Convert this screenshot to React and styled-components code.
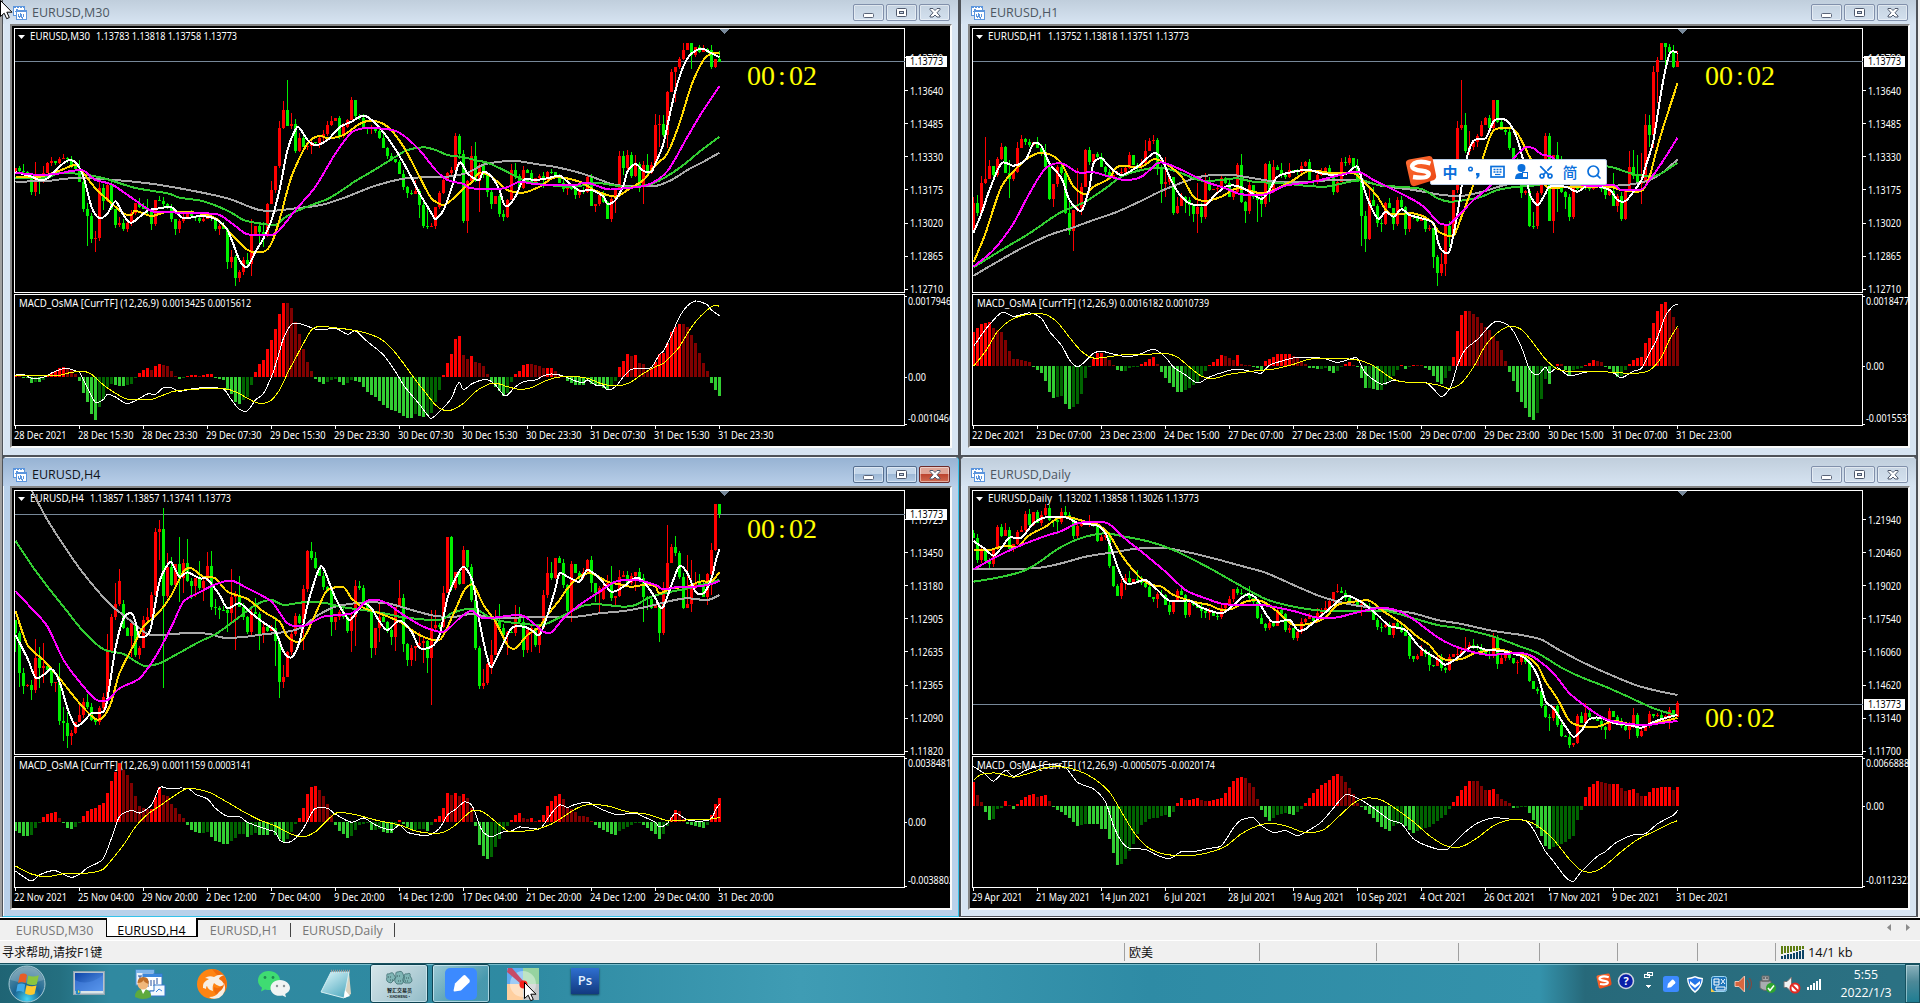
import React from 'react'
import styled, { createGlobalStyle, css } from 'styled-components'
import { Scissors, Search } from 'lucide-react'

const GlobalStyle = createGlobalStyle`
  html, body {
    background: #f0f0f0;
    margin: 0;
    overflow: hidden;
  }
  * {
    box-sizing: border-box;
  }
`

const UI_FONT = '"Open Sans", "Noto Sans", "Noto Sans CJK SC", sans-serif'
const PLOT_FONT = '"Noto Sans", "Open Sans", sans-serif'

/* ---------- data ---------- */

// candles: closing level, ^ high, v low, o open (when it differs from the last close)
// lines and bars: "bar level" pairs, levels between two pairs are interpolated
const charts = {
  m30: {
    title: 'EURUSD,M30',
    nameWidth: 60,
    values: '1.13783 1.13818 1.13758 1.13773',
    offset: 0,
    priceY: 61,
    clockY: 85,
    labels: ['1.13790', '1.13640', '1.13485', '1.13330', '1.13175', '1.13020', '1.12865', '1.12710'],
    dates: ['28 Dec 2021', '28 Dec 15:30', '28 Dec 23:30', '29 Dec 07:30', '29 Dec 15:30', '29 Dec 23:30', '30 Dec 07:30', '30 Dec 15:30', '30 Dec 23:30', '31 Dec 07:30', '31 Dec 15:30', '31 Dec 23:30'],
    candles: '503o515 512 516^492 535 575v585 535^487v588 545v583 520^498v550 490 483^470 490 478 474 476v490 497 507 545^480 628v637 647^610v738 718v728 715^693v755 565^545v722 602^552v630 555 628v630 675v683 668^650 687v692 670v695 640 608 620^595 627 632^597 672v690 600v678 603^588 612 622 657v665 687v705 664v700 650 640 648 655 662 657 652 655 687 678v705 686 785v806 770^750v803 833^765v858 815v845 780^770 793^758v805 703^658v827 678 697v730 707^665v740 612 570^543 497 385^363 330^303 378^240 372^340 453^358 413^400 440 437 425v463 430 415v443 403 375^362 363^347 354 408 380 360 300 348^300 355 383 388v402 384v402 392 415 443 467 478 487 521 562 578v593 583 573^540 615v655 678^600 681^620v688 678 620v687 580 540 520 510 408^398 463v478 662v670 543v698 467^437 543^427 495v635 525 577v590 612v628 588 643 650v662 600 510^492 527^488 563 510 520 545 535 527 540v565 515 515 527 550 568 563v585 568 585v597 573 575 530 618 612v635 585 607 657 597 565v640 468^453 503^453v525 465^450 527 492^465 555v575 496v612 520^462 495 375^342 372^345v440 405^345 275v443 217 202v305 177 150^130 130^130 165^130v207 142 155 148 150 200^135 178 185^154',
    ma: {
      gray: '0 546 4 544 8 543 15 534 25 540 35 553 45 574 53 595 58 618 61 630 64 633 70 625 75 618 78 610 82 594 85 580 90 557 97 536 102 532 108 530 113 518 117 494 122 484 126 484 130 492 135 501 140 515 144 530 150 555 156 558 160 558 164 540 168 510 172 485 176 458',
      green: '0 534 8 532 11 518 18 525 23 538 30 564 38 580 41 593 47 604 53 632 57 660 60 668 65 675 67 655 70 635 74 615 78 597 82 568 85 543 90 508 95 470 98 450 102 442 105 450 108 465 112 472 116 483 118 488 122 510 127 540 132 553 140 560 145 548 152 560 158 555 162 535 167 495 171 455 176 410',
      gold: '0 530 6 530 11 512 15 495 17 520 20 565 24 610 27 640 29 645 30 632 34 648 38 635 45 638 50 655 53 690 58 750 62 755 64 730 66 660 69 530 73 430 76 407 78 415 82 405 86 372 89 362 93 380 97 440 101 530 104 595 107 615 109 600 112 565 114 548 116 518 119 530 123 570 127 578 131 560 135 532 141 545 145 572 150 590 153 570 157 540 159 510 161 485 163 460 166 370 169 255 172 180 174 160 176 158',
      white: '0 516 4 530 6 540 8 535 11 500 13 482 15 487 17 530 19 620 21 655 23 640 25 604 27 645 29 668 33 632 36 625 39 622 42 655 46 648 50 657 53 690 56 780 58 800 60 755 62 715 64 660 66 570 68 450 70 388 71 384 73 420 75 435 78 420 81 382 84 365 87 347 90 370 94 430 98 510 101 580 104 640 105 657 107 630 109 565 111 488 113 520 115 538 116 540 117 515 119 530 121 570 122 610 123 618 125 590 127 540 130 540 133 535 136 527 138 545 141 572 144 570 147 590 148 612 150 600 152 555 153 515 155 492 157 513 159 515 160 490 162 430 164 320 166 230 168 175 170 152 172 147 174 160 176 172',
      magenta: '0 518 5 524 10 522 14 513 17 512 20 540 24 553 29 593 34 633 38 635 42 640 47 640 51 645 55 678 58 703 64 705 66 690 70 630 75 560 80 460 84 398 87 385 92 386 96 398 101 450 105 510 108 540 112 552 114 565 122 565 126 545 130 553 137 555 140 555 143 548 148 568 152 565 158 555 163 513 168 410 172 330 176 258',
    },
    osma: {
      values: '0.0013425 0.0015612',
      valuesWidth: 89,
      unit: 3,
      offset: 285,
      zero: 276,
      labels: ['0.0017946', '-0.0010466'],
      bars: '0 3 3 -2 4 -18 5 -14 6 -15 7 -10 8 0 9 12 10 18 11 27 12 30 13 28 14 20 15 8 16 -12 17 -48 18 -75 19 -112 20 -129 21 -90 22 -70 23 -30 24 -22 25 -24 27 -27 29 -20 30 -2 31 12 33 27 34 20 35 32 36 39 38 32 39 18 40 2 41 -6 43 3 45 6 46 2 48 9 49 9 50 -3 52 -9 53 -35 54 -50 55 -75 56 -81 57 -70 58 -60 59 -24 60 15 61 39 62 51 63 84 64 111 65 144 66 189 67 222 68 221 69 207 70 165 71 129 72 84 73 45 74 18 75 -6 77 -21 79 -9 80 -6 82 -24 84 -9 86 -15 88 -45 90 -60 92 -85 94 -98 96 -108 98 -123 99 -123 100 -111 102 -120 104 -108 105 -75 106 -40 107 6 108 42 109 69 110 114 111 123 112 66 113 54 114 63 115 45 116 42 117 33 118 8 119 -15 121 -42 122 -57 123 -48 124 -15 125 9 126 18 127 36 128 39 130 36 132 27 133 27 134 27 136 6 137 0 138 -12 140 -24 142 -24 143 -12 144 -20 146 -27 148 -36 150 -12 151 30 152 48 153 69 154 63 155 66 156 42 157 39 158 20 159 27 160 45 161 69 162 72 163 102 164 135 165 150 166 159 167 158 168 150 169 126 170 102 171 72 172 42 173 18 174 -18 175 -39 176 -57',
      white: '0 268 2 268 4 280 7 277 9 264 11 254 13 250 15 258 16 262 18 310 20 352 22 343 23 328 25 336 27 352 28 356 30 347 33 327 35 328 37 308 39 308 41 319 44 312 48 307 52 313 54 345 56 373 58 377 60 345 62 325 64 275 65 240 66 200 67 160 69 118 71 116 73 124 76 135 80 130 83 148 85 138 88 170 92 210 95 260 97 300 99 330 101 358 103 390 104 400 106 380 109 340 110 310 111 292 112 314 114 297 116 287 118 284 120 300 122 330 123 330 125 305 127 290 130 285 132 272 134 267 136 270 138 278 140 288 142 293 143 285 145 300 147 303 148 315 150 305 152 275 154 253 157 250 159 247 161 208 162 198 164 150 166 95 168 62 170 48 172 54 173 60 174 75 176 92',
      yellow: '0 272 5 271 8 272 11 271 14 262 17 259 19 268 22 300 25 325 28 343 31 344 34 343 37 330 40 318 46 312 52 311 55 320 58 340 60 352 62 355 64 345 66 315 68 265 70 220 72 175 74 135 76 124 79 127 83 133 87 142 91 160 94 190 97 235 100 285 102 315 105 360 107 375 109 375 112 355 115 320 117 305 119 295 121 297 123 305 126 313 129 308 132 290 135 278 139 274 143 280 147 298 151 302 154 290 157 265 160 245 162 235 164 212 166 185 168 145 170 110 172 85 174 65 175 61 176 64',
    },
  },
  h1: {
    title: 'EURUSD,H1',
    nameWidth: 54,
    values: '1.13752 1.13818 1.13751 1.13773',
    offset: 0,
    priceY: 61,
    clockY: 85,
    labels: ['1.13790', '1.13640', '1.13485', '1.13330', '1.13175', '1.13020', '1.12865', '1.12710'],
    dates: ['22 Dec 2021', '23 Dec 07:00', '23 Dec 23:00', '24 Dec 15:00', '27 Dec 07:00', '27 Dec 23:00', '28 Dec 15:00', '29 Dec 07:00', '29 Dec 23:00', '30 Dec 15:00', '31 Dec 07:00', '31 Dec 23:00'],
    candles: '610o690^590 638^585 550^528 537^410 498^480 525 478 440 518 537^480v593 515 443^427 418 425 435 425 445^412 458 500^432 597 553v620 500 520 640 692^600v705 630v752 625^505 560v645 450 487^440 463 470 500^460 515 535 525 520 517 505 465 495 500 490 453^420 423 420^405 508v525 553v610 547^470v590 530 640 618^590 592 600v640 615v648 643v665 620^550v698 650v668 540^520 570 567 565 535 550 590 575 495 605^462 633v668 555 590 600v665 612v650 493 577v605 500^480 510 525^490 530 510^490 512 515 497 487 540 545 525 515 503 515 575v585 545 487 490^470 475 500 545^478 647v738 717^632v755 600^560 618^560 668v682 672v695 610 625^595 672v690 600^590 620 687v705 645 652 662 655 687 685 772v805 818^765v858 793^760 677v827 705^663v740 570 383^363 375^240 453^340v460 440^393v465 425 408v440 375^362 354 383 300 365^300 390 397 443 480 520 578v593 572 677 678^635v688 580 530 408^398 662 465v698 480^427v635 577 590v627 650v662 565 568 555 560 566 555 560 567 585v597 573 618^520 587v635 657 570 500^453 528^450 553^465 545^460v612 375^342 405^345v440 217^197v443 180^172v308 130^130 142^130v200 155 200^135 183^154',
    ma: {
      gray: '0 827 6 785 12 745 19 705 25 682 30 660 36 635 42 602 46 578 51 553 56 532 60 525 65 525 70 535 76 545 84 545 90 540 96 540 102 557 110 570 116 583 118 586 122 588 127 576 132 558 137 545 145 550 152 556 158 558 163 555 166 550 169 540 172 520 174 500 176 478',
      green: '0 802 7 750 14 700 20 650 23 630 28 605 33 565 37 530 42 510 47 503 52 520 57 542 62 540 66 535 70 545 77 550 83 557 88 560 93 548 97 540 101 555 106 560 112 567 116 595 119 605 123 600 127 590 131 570 136 560 141 555 150 530 157 500 160 503 163 515 166 525 170 528 172 520 174 505 176 488',
      gold: '0 787 3 700 7 560 12 490 16 460 19 463 22 490 25 560 28 583 30 560 34 535 36 500 42 500 45 478 48 490 52 530 55 590 58 603 62 590 66 565 72 580 76 565 80 540 84 512 90 520 95 520 98 550 101 590 104 640 110 640 114 660 116 690 117 700 120 707 122 650 126 520 128 450 130 392 134 383 136 400 139 470 142 540 144 565 148 560 152 560 159 560 162 570 167 573 169 530 171 440 173 360 176 250',
      white: '0 698 2 640 4 570 7 490 10 497 13 480 15 430 17 438 19 490 22 535 24 600 27 632 29 560 30 490 32 475 34 500 37 525 41 500 45 460 47 475 49 530 51 575 54 610 58 615 60 590 63 560 66 558 69 575 72 597 74 570 76 530 80 515 84 510 88 523 93 523 96 500 98 580 101 655 103 635 105 650 107 628 109 645 112 655 115 670 116 720 117 750 119 753 121 640 123 490 125 422 128 415 130 365 132 356 134 370 136 420 138 510 139 580 141 615 143 580 144 560 148 560 151 575 154 555 159 570 161 600 163 603 165 575 167 540 168 500 170 420 172 270 174 162 176 158',
      magenta: '0 800 5 750 10 670 14 580 18 505 22 490 26 517 30 517 34 530 38 540 42 530 46 490 48 490 53 515 58 545 63 565 67 583 73 583 78 557 85 545 90 530 96 515 100 540 106 575 112 615 116 665 117 672 119 673 121 650 125 600 129 560 135 475 138 442 140 445 142 463 145 475 149 540 154 558 160 555 162 570 167 568 169 540 172 490 176 413',
    },
    osma: {
      values: '0.0016182 0.0010739',
      valuesWidth: 89,
      unit: 2.529,
      offset: 290,
      zero: 192,
      labels: ['0.0018477', '-0.0015537'],
      bars: '0 87 1 97 2 105 3 110 4 112 5 95 7 85 8 65 9 38 10 18 12 15 14 9 15 -3 17 -18 18 -38 19 -65 20 -80 22 -76 23 -95 24 -109 25 -103 26 -95 27 -70 28 -30 29 -3 30 18 31 32 32 32 33 24 34 16 35 2 36 -10 37 -13 38 -12 39 -4 41 -2 42 4 43 10 44 18 45 22 46 5 47 -15 48 -30 49 -42 51 -66 52 -66 54 -56 56 -40 57 -25 58 -12 59 3 61 18 62 28 63 26 65 15 66 27 67 4 69 3 71 -5 72 -10 73 12 75 24 76 30 79 30 81 20 83 5 84 -4 86 -8 88 -6 90 -18 91 -12 92 -2 94 10 96 -3 97 -30 98 -56 99 -55 101 -61 102 -60 103 -48 105 -26 106 -10 107 0 108 -8 110 2 112 1 113 -4 114 -10 115 -25 116 -40 117 -46 118 -30 119 -12 120 24 121 88 122 128 123 140 124 138 126 125 127 108 129 90 131 62 132 40 133 12 134 -16 135 -38 136 -65 137 -90 138 -105 139 -128 140 -137 141 -118 142 -84 143 -32 144 -45 145 -5 146 6 147 4 149 -24 150 -10 152 -5 153 3 155 14 157 9 158 -2 160 -15 161 -28 162 -25 163 -10 164 6 165 16 167 24 168 58 169 70 170 110 171 140 172 158 173 163 174 145 175 125 176 95',
      white: '0 143 3 100 7 57 10 67 14 58 17 72 19 105 22 140 24 177 26 194 28 180 30 160 32 155 35 162 38 168 41 165 45 150 48 170 50 195 53 215 56 235 59 220 63 206 66 200 70 207 72 210 74 190 77 180 80 172 84 170 88 174 91 183 95 172 96 173 98 210 102 238 105 228 108 233 113 234 115 250 117 270 119 250 120 225 121 190 123 150 126 125 130 82 133 85 135 105 137 145 139 200 141 215 143 195 144 210 146 197 149 217 153 208 156 205 160 210 162 222 165 205 167 198 169 160 171 120 173 65 175 40 176 36',
      yellow: '0 193 3 155 6 105 9 78 12 65 15 60 18 62 21 82 24 120 27 155 30 172 33 170 38 163 43 163 48 160 51 170 54 195 57 218 60 224 64 213 70 205 75 200 80 188 84 175 90 173 96 177 100 192 104 220 107 232 112 234 116 240 119 249 122 235 125 195 128 140 131 108 134 92 137 100 140 135 143 175 146 200 150 207 158 207 165 211 169 203 172 170 174 125 176 92',
    },
  },
  h4: {
    title: 'EURUSD,H4',
    nameWidth: 54,
    values: '1.13857 1.13857 1.13741 1.13773',
    offset: -7,
    priceY: 52,
    clockY: 76,
    labels: ['1.13725', '1.13450', '1.13180', '1.12905', '1.12635', '1.12365', '1.12090', '1.11820'],
    dates: ['22 Nov 2021', '25 Nov 04:00', '29 Nov 20:00', '2 Dec 12:00', '7 Dec 04:00', '9 Dec 20:00', '14 Dec 12:00', '17 Dec 04:00', '21 Dec 20:00', '24 Dec 12:00', '29 Dec 04:00', '31 Dec 20:00'],
    candles: '535o495v590 653v695 692^640v717 690 705^675v735 608^552 640^575v700 632^563v683 645 683 680v710 797^625v810 803^755v857 843^770v878 833v870 800 780^750 742^730 757^717 795^745 800v810 760v810 725 590^538 487 448^385 378^342 520o448 543 505v605 600 578v613 495 485^460 420 232^220 222^195v315 423^158v698 335^295 390^307 328 370^247v440 325^313v415 377^252 393v432 368v425 400^318 378v437 333^290 455^288 460^432v480 465v492 465 473v530 427^342v508 420^408v585 455^363 485 530 470v540 478^430 538v585 515v563 528 520 557^485v632 680v728 665^630v698 590 538 483^475 505 403v585 287 308^262 340^290 363 397 405 500v542 487v525 470 485 527v535 485v590 393^375v573 400^377 440^390 465 578v608 518v600 485^445v560 500 525 545v570 455v588 430^375 567v592 615v632 578v632 573v617 563^530 558v625 608v653 518^465v750 510^465 515 413^393 247^247 400^244 350 387 285 337^285 435 578v585 693v702 685^642v703 628 600^555v656 498^465 520^447 540v565 530v600 535 490^450 500^455 585v605 525v593 520v590 570 520v593 420^405 355^305 370^320 310 325 390 467 328v500 355 365 350 315 383^303v410 415v440 400v470 395o433 385^360 430^333 422v450 365^345 360 385^348 362 350v408 370^338 427v500 432v465 460 450 535v560 398^380 325^210 275 295^243 365 460 447^300 395^315v470 385^350 390^357 425 357v450 285^265v420 147^147 178^147v190',
    ma: {
      gray: '4 105 8 195 12 270 16 340 20 400 24 452 28 490 33 537 36 540 42 535 48 536 52 548 57 546 62 538 68 530 72 515 75 485 80 455 87 443 93 445 99 465 105 483 110 485 114 477 118 485 122 490 130 485 140 485 146 475 152 468 158 455 164 437 168 430 173 435 176 420',
      green: '0 257 4 330 8 395 12 455 17 530 22 583 27 597 32 632 36 625 40 600 46 560 50 538 55 495 60 450 64 435 67 450 72 442 77 443 82 457 87 465 93 477 97 487 106 495 109 475 113 462 116 468 120 495 130 510 133 505 138 475 142 452 146 448 152 455 155 450 159 425 164 410 170 395 176 375',
      gold: '0 467 3 570 7 615 11 670 16 745 20 792 22 785 24 740 26 655 30 560 32 515 36 470 39 420 42 350 44 340 47 365 50 370 53 410 58 432 62 470 66 500 68 545 71 562 73 530 76 450 78 405 82 397 84 430 87 458 91 475 96 500 101 540 106 555 109 490 112 410 114 388 115 400 117 450 120 500 123 570 125 580 128 540 131 515 133 480 136 435 138 400 141 365 144 355 148 380 151 388 154 395 158 388 160 395 161 415 164 400 168 395 171 380 174 378 176 352',
      white: '0 540 3 610 5 668 7 660 9 642 11 680 13 760 15 812 17 800 19 775 22 770 23 730 25 580 27 490 29 475 30 500 31 545 33 540 34 510 36 380 38 330 39 322 41 365 43 352 46 370 48 373 51 420 53 460 56 445 59 475 62 503 65 530 67 590 69 607 71 560 73 450 75 370 76 340 77 340 80 430 83 490 84 492 87 447 89 460 91 500 93 525 96 497 99 530 101 578 104 575 106 540 108 430 110 370 112 335 114 370 115 420 116 500 117 560 118 610 119 637 121 590 124 520 127 515 129 525 131 540 133 480 135 400 136 355 138 365 141 380 143 345 146 370 149 410 152 395 155 368 157 380 160 430 161 455 162 455 164 390 166 333 168 355 170 410 172 415 174 370 175 320 176 282',
      magenta: '0 408 4 460 8 515 12 615 16 680 20 733 23 735 26 700 31 670 35 605 39 515 42 440 46 412 50 388 54 377 58 400 64 440 68 505 72 513 77 485 84 475 88 437 92 440 97 480 102 515 107 530 111 490 114 467 117 490 126 480 129 500 132 530 134 532 137 490 141 450 146 410 150 380 155 375 160 390 162 403 166 395 170 395 174 387 176 377',
    },
    osma: {
      values: '0.0011159 0.0003141',
      valuesWidth: 89,
      unit: 3,
      offset: 283,
      zero: 232,
      labels: ['0.0038481', '-0.0038802'],
      bars: '0 -27 1 -32 2 -41 3 -41 4 -38 5 -18 6 -3 7 15 8 24 10 30 11 12 12 -3 13 -17 14 -20 15 -15 16 -2 17 18 18 33 20 42 22 57 23 88 24 124 25 150 26 178 27 155 28 140 29 118 30 78 31 48 33 38 34 40 35 75 36 105 37 82 38 78 39 54 40 42 41 24 42 12 43 -10 44 -24 46 -33 48 -30 50 -57 52 -65 53 -65 54 -57 56 -36 57 -35 58 -44 60 -32 61 -38 63 -38 64 -28 66 -50 67 -60 68 -50 69 -30 70 -5 71 12 72 42 73 85 74 105 75 108 76 96 77 78 78 55 79 22 80 -8 81 -26 83 -47 84 -42 85 -24 86 -8 88 -3 89 -24 91 -22 92 -30 94 -33 95 -15 96 6 97 -6 99 -24 102 -20 103 -27 104 -8 105 9 106 18 107 42 108 88 109 82 110 88 111 78 112 84 113 72 114 42 115 -11 116 -68 117 -102 118 -110 119 -105 120 -75 121 -50 122 -24 123 -12 124 6 125 20 126 27 127 12 128 9 129 12 130 3 131 6 132 22 133 48 134 62 135 78 136 84 137 68 138 45 140 30 141 18 143 15 144 3 145 -10 147 -24 149 -36 150 -39 151 -27 153 -15 155 -3 156 -2 158 -18 160 -36 161 -50 162 -36 163 -12 164 15 165 36 166 33 167 10 168 -6 170 -12 172 -18 173 -9 174 22 175 54 176 72',
      white: '0 378 2 395 4 408 6 390 8 380 10 377 12 388 14 397 16 388 18 368 20 357 22 340 24 280 26 215 29 196 31 204 34 180 36 128 38 130 43 130 45 148 48 162 50 190 53 214 56 215 58 232 62 250 65 262 66 285 68 293 70 280 72 250 74 205 75 190 78 190 80 208 84 232 87 219 90 240 94 255 96 240 98 262 101 270 103 272 106 250 108 210 110 193 112 172 113 172 114 180 115 205 116 240 117 262 119 275 122 260 124 258 126 246 129 250 131 252 132 240 134 205 136 180 138 187 140 178 143 172 146 190 150 208 155 205 157 215 160 232 161 246 163 235 165 205 168 225 172 228 174 220 175 195 176 178',
      yellow: '0 363 4 387 8 395 12 386 16 386 20 381 22 372 24 345 27 300 30 245 33 208 36 183 40 150 43 130 46 134 49 145 53 172 57 200 61 225 65 243 69 268 72 275 75 260 78 225 80 205 82 203 86 212 90 225 96 240 100 258 104 265 107 262 110 240 112 218 114 198 116 197 118 210 121 240 123 257 125 260 130 254 134 237 137 215 140 192 143 179 148 183 153 200 158 208 162 224 164 228 170 223 174 222 176 217',
    },
  },
  daily: {
    title: 'EURUSD,Daily',
    nameWidth: 64,
    values: '1.13202 1.13858 1.13026 1.13773',
    offset: -7,
    priceY: 242,
    clockY: 265,
    labels: ['1.21940', '1.20460', '1.19020', '1.17540', '1.16060', '1.14620', '1.13140', '1.11700'],
    dates: ['29 Apr 2021', '21 May 2021', '14 Jun 2021', '6 Jul 2021', '28 Jul 2021', '19 Aug 2021', '10 Sep 2021', '4 Oct 2021', '26 Oct 2021', '17 Nov 2021', '9 Dec 2021', '31 Dec 2021'],
    candles: '250o235^225 315^238 285v325 318 327v340 280 215 242^207 225^205 282 268v292 230 225^212 177^168 210^163 172 205^165 180 158^148 195^150 196v215 202v238 172 180^153 188 242 212v250 205 207 205^180 210 257 245 240 332 392 423 383 370^357v405 380^348 372 375^345 385 397 425 432 418v458 420 450 472 435 408 420 480 445 450 458 468v488 475v488 468v495 483 485v495 460 450 432 402 413^395 418 420 430^393 440 490 508 518 503 512 465 478 525 520v535 548v555 530 500 493 483 498 475^460 470 458^437 437 412 408^388 415 430^405 445 440 455 448v483 452 460 495 515 515v530 510 540 505 515 530 542 603 612v622 603 585^570 598 630v648 633 608 638 646v654 606 598 596^578 587 578^546 569 572^551 578 590 598 602 546^535 628v643 610 594 608 623 620v658 602 620 679 703 709 753 786 788v827 753 810 843 845 869v878 863 783 804 774^744 786 792 798 815 825v851 768 786 801 812 825 810v853 780^759 843 827 810 778 783 780 789 782 765v821 786 744',
    ma: {
      gray: '0 343 15 340 22 325 28 305 35 292 40 282 47 278 53 290 60 310 67 333 73 353 80 390 87 425 95 450 104 465 110 475 116 495 122 507 130 528 137 540 142 554 146 582 152 620 158 653 165 688 170 705 176 720',
      green: '0 380 6 368 12 350 16 325 20 290 24 263 28 245 33 235 37 243 44 260 50 285 58 333 65 380 73 432 80 455 87 467 94 468 103 468 110 490 116 510 122 521 130 545 137 576 141 594 147 638 152 667 158 695 164 727 170 760 176 782',
      gold: '0 285 4 285 8 272 11 275 14 240 18 215 21 190 24 187 28 200 31 208 34 240 37 300 41 360 44 388 47 395 50 420 55 440 59 450 62 465 65 460 68 440 72 438 76 470 80 510 85 503 88 487 91 450 95 440 99 437 102 465 107 505 111 545 114 570 116 600 118 614 122 612 125 596 128 588 131 582 135 594 138 602 141 632 143 679 146 732 149 798 152 813 156 815 160 798 164 807 168 810 172 800 176 789',
      white: '0 258 3 283 5 302 7 278 9 248 12 248 15 205 18 187 23 187 26 203 31 212 33 235 34 265 36 335 38 383 40 385 43 375 46 405 49 437 54 437 57 458 62 475 65 450 67 428 69 418 71 435 73 475 75 502 79 495 81 525 83 522 87 482 91 440 93 422 95 428 98 450 101 480 104 513 108 525 111 570 113 590 116 612 118 629 121 608 124 578 126 576 128 584 131 587 134 593 138 610 141 661 143 738 145 760 148 815 150 845 152 827 154 792 157 789 160 804 164 810 167 818 170 801 173 789 176 780',
      magenta: '0 343 5 310 12 270 18 243 22 228 26 205 31 200 34 208 38 252 42 290 48 350 53 405 58 430 63 448 72 450 80 468 86 488 91 487 96 472 101 460 105 463 109 485 113 520 116 547 120 572 125 592 129 600 133 596 138 596 141 614 145 655 149 715 154 762 158 792 162 804 168 810 172 804 176 798',
    },
    osma: {
      values: '-0.0005075 -0.0020174',
      valuesWidth: 95,
      unit: 2.529,
      offset: -172,
      zero: 1305,
      labels: ['0.0066888', '-0.0112323'],
      bars: '0 60 1 27 2 10 3 -15 4 -35 5 -34 6 -8 7 -5 8 12 10 -8 11 5 13 24 15 30 16 24 18 28 19 12 20 -3 22 -15 24 -30 26 -50 28 -45 31 -45 32 -57 33 -58 34 -83 35 -118 36 -149 37 -147 38 -133 39 -115 40 -96 41 -70 42 -47 44 -32 46 -30 48 -22 49 -28 50 -15 51 8 52 20 53 14 56 20 58 12 60 14 62 20 63 33 64 47 65 62 66 70 67 74 68 70 70 48 71 18 72 -10 73 -27 74 -38 76 -22 78 -18 80 -23 82 -8 83 8 85 33 87 53 89 65 90 77 91 80 92 76 93 60 95 30 96 8 97 -2 98 -10 100 -30 102 -52 104 -63 105 -50 107 -43 110 -68 112 -60 114 -52 116 -38 118 -24 119 -8 120 10 122 40 124 63 126 62 128 40 130 43 132 18 134 8 135 -5 138 -2 139 -18 141 -55 142 -75 143 -100 144 -108 146 -100 148 -90 150 -75 151 -35 152 -10 153 22 154 48 156 63 159 55 161 55 163 38 165 42 167 25 168 25 170 45 172 48 174 48 175 40 176 48',
      white: '0 1205 3 1225 5 1242 8 1215 10 1230 13 1215 16 1205 19 1200 23 1208 26 1245 30 1262 33 1295 35 1355 37 1395 39 1412 43 1415 46 1430 49 1438 52 1420 55 1420 59 1412 62 1405 65 1360 67 1340 70 1335 72 1355 75 1372 78 1367 81 1380 84 1365 87 1345 90 1310 93 1277 96 1285 100 1310 104 1340 107 1350 110 1388 114 1408 118 1416 120 1400 123 1370 126 1348 130 1335 134 1338 138 1342 140 1365 143 1420 145 1445 148 1485 150 1495 152 1470 156 1432 158 1420 161 1395 165 1378 168 1375 171 1350 175 1328 176 1315',
      yellow: '0 1240 2 1225 6 1222 10 1232 14 1222 18 1208 22 1206 26 1215 30 1235 34 1270 37 1320 40 1370 43 1405 46 1422 50 1430 55 1430 59 1422 63 1407 67 1375 71 1355 74 1349 78 1355 82 1370 85 1372 88 1362 92 1325 95 1298 98 1285 102 1290 106 1315 110 1345 114 1380 118 1405 122 1408 126 1385 130 1355 134 1340 138 1342 141 1355 145 1390 149 1440 152 1468 155 1471 158 1455 162 1420 166 1390 170 1370 174 1350 176 1342',
    },
  },
}

/* ---------- plotting ---------- */

const COLORS = { gray: '#a9a9a9', green: '#32cd32', gold: '#ffd700', white: '#fff', magenta: '#f0f' }
const BAR_COUNT = 177
const barX = (i) => 15.5 + i * 4

const toPairs = (text) => {
  const n = text.split(' ').map(Number)
  return n.reduce((acc, v, i) => (i % 2 ? acc : [...acc, [v, n[i + 1]]]), [])
}

const linePath = (text, unit, offset) => {
  const p = toPairs(text).map(([i, y]) => [barX(i), y / unit + offset])
  return p.reduce((d, [x, y], i) => {
    if (i === 0) return `M${x} ${y.toFixed(1)}`
    const a = p[i - 2] || p[i - 1]
    const b = p[i - 1]
    const c = p[i + 1] || p[i]
    const k = 0.14
    return `${d}C${(b[0] + (x - a[0]) * k).toFixed(1)} ${(b[1] + (y - a[1]) * k).toFixed(1)} ${(x - (c[0] - b[0]) * k).toFixed(1)} ${(y - (c[1] - b[1]) * k).toFixed(1)} ${x} ${y.toFixed(1)}`
  }, '')
}

const barValues = (text) => {
  const pairs = toPairs(text)
  return Array.from({ length: BAR_COUNT }, (_, i) => {
    const at = Math.max(1, pairs.findIndex(([x]) => x >= i))
    const [x0, y0] = pairs[at - 1]
    const [x1, y1] = pairs[at]
    return y0 + ((y1 - y0) * (i - x0)) / (x1 - x0)
  })
}

const pick = (item, pattern) => {
  const m = item.match(pattern)
  return m ? Number(m[1]) : null
}

const toCandles = (text) => {
  let last = 0
  return text.split(' ').map((item, i) => {
    const close = parseInt(item, 10)
    const open = pick(item, /o(\d+)/) ?? last
    last = close
    const top = Math.min(open, close)
    const bottom = Math.max(open, close)
    return {
      top,
      bottom,
      high: pick(item, /\^(\d+)/) ?? top - ((i * 7) % 5) * 3,
      low: pick(item, /v(\d+)/) ?? bottom + ((i * 11) % 4) * 3,
      up: close < open,
    }
  })
}

const GLYPH_WIDTHS = { ' ': 3, ':': 3, '.': 3, '-': 3, D: 7, N: 7, M: 8, A: 6, O: 7, J: 4, r: 3.5, t: 3.5, l: 2.5, c: 4.5, S: 5.5 }
const widthOf = (text) => [...text].reduce((sum, ch) => sum + (GLYPH_WIDTHS[ch] ?? 5), 0)

const PlotSvg = styled.svg`
  display: block;
  width: 938px;
  height: 420px;
  background: #000;
  font-family: ${PLOT_FONT};
  font-size: 10px;
`

const Timer = styled.text`
  fill: #ff0;
  font-family: "Liberation Serif", serif;
  font-size: 28px;
`

function Label({ x, y, width, children, fill = '#fff' }) {
  return (
    <text x={x} y={y} fill={fill} textLength={width || widthOf(children)} lengthAdjust="spacingAndGlyphs">
      {children}
    </text>
  )
}

function Candles({ data, offset }) {
  return toCandles(data).map((c, i) => {
    const y = (v) => Math.round(v / 3 + offset)
    const fill = c.up ? '#f00' : '#00f000'
    return (
      <g key={i} fill={fill}>
        <rect x={15 + i * 4} y={y(c.high)} width="1" height={Math.max(1, y(c.low) - y(c.high))} />
        <rect x={14 + i * 4} y={y(c.top)} width="3" height={Math.max(1, y(c.bottom) - y(c.top))} />
      </g>
    )
  })
}

function Histogram({ osma }) {
  const values = barValues(osma.bars)
  const zero = Math.round(osma.zero / osma.unit + osma.offset)
  return values.map((v, i) => {
    const prev = i ? values[i - 1] : 0
    const h = Math.max(1, Math.round(Math.abs(v) / osma.unit))
    const growing = v >= 0 ? v >= prev : v <= prev
    const fill = v >= 0 ? (growing ? '#f00' : '#800000') : (growing ? '#32cd32' : '#006400')
    return <rect key={i} x={14 + i * 4} y={v >= 0 ? zero - h : zero} width="3" height={h} fill={fill} />
  })
}

function Plot({ chart }) {
  const { osma } = chart
  const zero = osma.zero / osma.unit + osma.offset
  return (
    <PlotSvg viewBox="12 26 938 420">
      <clipPath id="plot-area"><rect x="15" y="29" width="889" height="396" /></clipPath>
      <path d="M18 35h7l-3.5 4z" fill="#fff" />
      <Label x={30} y={40} width={chart.nameWidth}>{chart.title}</Label>
      <Label x={36 + chart.nameWidth} y={40} width={141}>{chart.values}</Label>
      <Label x={19} y={307} width={140}>MACD_OsMA [CurrTF] (12,26,9)</Label>
      <Label x={162} y={307} width={osma.valuesWidth}>{osma.values}</Label>

      <g shapeRendering="crispEdges">
        <rect x="14.5" y="28.5" width="890" height="264" fill="none" stroke="#fff" />
        <rect x="14.5" y="294.5" width="890" height="131" fill="none" stroke="#fff" />
        <rect x="15" y={chart.priceY} width="890" height="1" fill="#778899" />
        <g clipPath="url(#plot-area)">
          <Candles data={chart.candles} offset={chart.offset} />
          {Object.entries(chart.ma).map(([name, line]) => (
            <path key={name} d={linePath(line, 3, chart.offset)} fill="none" stroke={COLORS[name]} strokeWidth="2" />
          ))}
          <Histogram osma={osma} />
          <path d={linePath(osma.white, osma.unit, osma.offset)} fill="none" stroke="#fff" />
          <path d={linePath(osma.yellow, osma.unit, osma.offset)} fill="none" stroke="#ff0" />
        </g>
        <path d="M720 29h9l-4.500 5z" fill="#778899" />
        {chart.labels.map((label, i) => (
          <rect key={label} x="905" y={57 + i * 33 + (i > 4 ? 1 : 0)} width="3" height="1" fill="#fff" />
        ))}
        {chart.dates.map((date, i) => <rect key={date} x={15 + i * 64} y="426" width="1" height="3" fill="#fff" />)}
        <rect x="905" y="296" width="2" height="1" fill="#fff" />
        <rect x="905" y={Math.round(zero)} width="2" height="1" fill="#fff" />
        <rect x="905" y="424" width="2" height="1" fill="#fff" />
      </g>

      {chart.labels.map((label, i) => (
        <Label key={label} x={910} y={61.5 + i * 33 + (i > 4 ? 0.5 : 0)}>{label}</Label>
      ))}
      <rect x="906" y={chart.priceY - 5} width="41" height="11" fill="#fff" />
      <Label x={910} y={chart.priceY + 4} fill="#000">1.13773</Label>
      <Label x={908} y={305}>{osma.labels[0]}</Label>
      <Label x={908} y={zero + 4}>0.00</Label>
      <Label x={908} y={422}>{osma.labels[1]}</Label>
      {chart.dates.map((date, i) => <Label key={date} x={14 + i * 64} y={438.5}>{date}</Label>)}
      <Timer x="747 761 778 789 803" y={chart.clockY}>00:02</Timer>
    </PlotSvg>
  )
}

/* ---------- chart windows ---------- */

const Screen = styled.div`
  display: flex;
  flex-direction: column;
  position: relative;
  width: 1920px;
  height: 1003px;
  overflow: hidden;
  background: #f0f0f0;
  font-family: ${UI_FONT};
`

const Workspace = styled.main`
  display: grid;
  grid-template-columns: 957px 957px;
  grid-template-rows: 456px 461px;
  column-gap: 1px;
  padding-left: 2px;
  width: 1918px;
  height: 917px;
  background: linear-gradient(90deg, #a0a0a0 2px, #4e5258 2px);
`

const Frame = styled.section`
  display: flex;
  flex-direction: column;
  border-left: 1px solid #4e5258;
  border-right: 1px solid ${({ $active }) => ($active ? '#35c3ea' : '#4e5258')};
  border-bottom: 1px solid ${({ $active }) => ($active ? '#35c3ea' : '#4e5258')};
  border-top: ${({ $top }) => ($top ? 'none' : '1px solid #4e5258')};
  border-radius: ${({ $top }) => ($top ? 0 : '5px 5px 0 0')};
  background: ${({ $active }) => ($active ? '#b9d1ea' : '#d7e4f2')};
  box-shadow: inset 1px 1px 0 ${({ $active }) => ($active ? '#f3f8fd' : '#e4edf6')};
  overflow: hidden;
`

const TitleBar = styled.header`
  display: flex;
  align-items: center;
  flex: none;
  height: ${({ $top }) => ($top ? 24 : 29)}px;
  padding: ${({ $top }) => ($top ? '1px' : '5px')} 8px 0 10px;
  border-top: ${({ $top }) => ($top ? 'none' : '1px solid #eef5fb')};
  background: ${({ $active }) => ($active
    ? 'linear-gradient(#97b3d3, #b9cfe9)'
    : 'linear-gradient(#c0cedc, #d7e4f2)')};
  color: ${({ $active }) => ($active ? '#10151c' : '#4c5762')};
`

const Title = styled.span`
  flex: 1;
  margin-left: 4px;
  font-size: 12.5px;
  line-height: 18px;
`

const Controls = styled.div`
  display: flex;
  gap: 2px;
`

const ControlButton = styled.button`
  display: flex;
  align-items: center;
  justify-content: center;
  width: 31px;
  height: 17px;
  padding: 0;
  border: 1px solid #8190ab;
  border-radius: 2px;
  background: transparent;
  box-shadow: inset 0 0 0 1px rgba(255, 255, 255, 0.45);
  ${({ $active }) => $active && css`
    border-color: #566f90;
    background: linear-gradient(#c3d6ea 45%, #9db8d6 50%, #b5cce5);
  `}
  ${({ $danger }) => $danger && css`
    border-color: #6d2a2a;
    background: linear-gradient(#dfa598 45%, #bd4530 50%, #cf6a50);
  `}
`

const Client = styled.div`
  width: 942px;
  margin-left: 7px;
  border: 2px solid;
  border-color: #858585 #fafafa #fafafa #858585;
`

function ChartIcon() {
  return (
    <svg width="15" height="15" viewBox="0 0 15 15" shapeRendering="crispEdges">
      <rect x="0.500" y="1" width="11" height="9" fill="#fff" stroke="#5b95dd" />
      <path d="M1 1.500h10" stroke="#5b95dd" strokeWidth="2" strokeDasharray="2 1" />
      <path d="M2 6h1v-2h1v2h1" stroke="#5b95dd" fill="none" />
      <rect x="3.500" y="5.500" width="10" height="9" fill="#fff" stroke="#5b95dd" />
      <path d="M4 6h9" stroke="#5b95dd" strokeWidth="2" />
      <path d="M5.500 9v2l1 1 1-1v-2l1 1v2l1 1 1-2v-2" stroke="#5b95dd" fill="none" />
    </svg>
  )
}

function WindowControls({ active }) {
  return (
    <Controls>
      <ControlButton $active={active}>
        <svg width="12" height="10"><rect x="0.500" y="5.500" width="10" height="4" rx="1" fill="#fff" stroke="#5a6478" /></svg>
      </ControlButton>
      <ControlButton $active={active}>
        <svg width="12" height="10">
          <rect x="0.500" y="0.500" width="10" height="8" rx="1" fill="#fff" stroke="#4e586c" />
          <rect x="3.500" y="3.500" width="4" height="2" fill="#c8d6e6" stroke="#4e586c" />
        </svg>
      </ControlButton>
      <ControlButton $danger={active}>
        <svg width="12" height="10" viewBox="0 0 12 10">
          <path d="M1 .5h3l2 2 2-2h3v1L8 4.800l3 3.200v1H8L6 7 4 9H1V8l3-3.200L1 1.500z" fill="#fff" stroke="#4e586c" />
        </svg>
      </ControlButton>
    </Controls>
  )
}

function ChartWindow({ chart, top, active }) {
  return (
    <Frame $top={top} $active={active}>
      <TitleBar $top={top} $active={active}>
        <ChartIcon />
        <Title>{chart.title}</Title>
        <WindowControls active={active} />
      </TitleBar>
      <Client>
        <Plot chart={chart} />
      </Client>
    </Frame>
  )
}

/* ---------- tabs and status ---------- */

const TabBar = styled.nav`
  display: flex;
  flex: none;
  height: 24px;
  padding: 0 9px 3px 3px;
  border-top: 1px solid #fff;
  border-bottom: 1px solid #fff;
  box-shadow: inset 0 2px 0 #000;
  background: #f0f0f0;
  font-size: 12.5px;
  color: #777;
`

const Tab = styled.div`
  width: ${({ $width }) => $width}px;
  padding-top: 3px;
  text-align: center;
  line-height: 19px;
  ${({ $active }) => $active && css`
    background: #fff;
    border: solid #000;
    border-width: 0 2px 1px 1px;
    color: #000;
  `}
`

const TabRule = styled.i`
  width: 1px;
  height: 14px;
  margin-top: 5px;
  background: #444;
`

const TabArrows = styled.span`
  display: flex;
  align-items: center;
  gap: 14px;
  margin-left: auto;
`

const StatusBar = styled.div`
  display: flex;
  flex: none;
  align-items: center;
  height: 22px;
  background: #f0f0f0;
  color: #111;
  font-size: 12px;
`

const StatusCell = styled.div`
  display: flex;
  align-items: center;
  gap: 4px;
  width: ${({ $width }) => $width}px;
  height: 18px;
  padding-left: ${({ $pad }) => $pad ?? 4}px;
  border-left: ${({ $first }) => ($first ? 'none' : '1px solid #a0a0a0')};
  white-space: nowrap;
`

const cells = [135, 117, 82, 81, 78, 80, 78]

function Tabs() {
  return (
    <TabBar>
      <Tab $width={103}>EURUSD,M30</Tab>
      <Tab $width={92} $active>EURUSD,H4</Tab>
      <Tab $width={92}>EURUSD,H1</Tab>
      <TabRule />
      <Tab $width={103}>EURUSD,Daily</Tab>
      <TabRule />
      <TabArrows>
        <svg width="5" height="8"><path d="M4 0v7L0 3.500z" fill="#8b8b8b" /></svg>
        <svg width="5" height="8"><path d="M0 0v7L4 3.500z" fill="#8b8b8b" /></svg>
      </TabArrows>
    </TabBar>
  )
}

function Status() {
  return (
    <StatusBar>
      <StatusCell $width={1124} $pad={2} $first>寻求帮助,请按F1键</StatusCell>
      {cells.map((width, i) => <StatusCell key={i} $width={width}>{i === 0 && '欧美'}</StatusCell>)}
      <StatusCell $width={140} $pad={5}>
        <svg width="23" height="13" shapeRendering="crispEdges">
          {[0, 1, 2, 3, 4, 5, 6, 7].map((i) => (
            <g key={i}>
              <rect x={i * 3} y="0" width="2" height={8 - i * 0.700} fill="#5d7d10" />
              <rect x={i * 3} y={10 - i * 0.800} width="2" height={3 + i * 0.800} fill="#0c4366" />
            </g>
          ))}
        </svg>
        <Traffic>14/1 kb</Traffic>
      </StatusCell>
    </StatusBar>
  )
}

const Traffic = styled.span`
  font-size: 12.8px;
`

/* ---------- taskbar ---------- */

const TaskbarRoot = styled.footer`
  display: flex;
  align-items: center;
  flex: none;
  height: 40px;
  border-top: 1px solid #17505e;
  box-shadow: inset 0 1px 0 rgba(150, 210, 222, 0.7);
  background: linear-gradient(90deg, #1f6474 0, #246f80 60px, #3089a0 110px, #2e8aa2 520px, #3f9cb4 800px, #2e8ba5 1150px, #3492ab 1540px, #27697a 1585px, #2b7183 1890px, #2b7183 100%);
`

const StartButton = styled.div`
  width: 54px;
  height: 38px;
`

const Task = styled.div`
  display: flex;
  align-items: center;
  justify-content: center;
  flex: none;
  width: ${({ $width }) => $width || 62}px;
  height: 39px;
  ${({ $open }) => $open && css`
    border: 1px solid #0e4352;
    border-radius: 3px;
    box-shadow: inset 0 0 0 1px rgba(220, 245, 250, 0.65);
    background: linear-gradient(135deg, rgba(215, 235, 240, 0.65), rgba(120, 180, 195, 0.35) 70%);
  `}
  ${({ $focused }) => $focused && css`
    background: linear-gradient(135deg, #d6e5e9, #b3cfd7 55%, #91bcc8);
  `}
`

const Tray = styled.div`
  display: flex;
  align-items: center;
  margin-left: auto;
  height: 39px;
`

const TrayIcon = styled.svg`
  flex: none;
  width: ${({ $narrow }) => ($narrow ? 22 : 24)}px;
  height: 24px;
  margin-top: ${({ $low }) => ($low ? 1 : -6)}px;
`

const Clock = styled.div`
  width: 78px;
  color: #fff;
  font-size: 12.3px;
  line-height: 18px;
  text-align: center;
`

const ShowDesktop = styled.div`
  width: 15px;
  height: 39px;
  border: 1px solid #16515f;
  box-shadow: inset 1px 1px 0 rgba(220, 245, 250, 0.5);
  background: linear-gradient(#8cb2bd, #4d8998 45%, #1f7d92);
`

function StartOrb() {
  return (
    <svg width="54" height="38" viewBox="0 0 54 38">
      <defs>
        <radialGradient id="orb" cx="50%" cy="92%" r="85%">
          <stop offset="0" stopColor="#43d5f5" />
          <stop offset="0.450" stopColor="#1a6592" />
          <stop offset="1" stopColor="#5d90a5" />
        </radialGradient>
      </defs>
      <circle cx="27" cy="19" r="18" fill="url(#orb)" stroke="#a6c9d3" />
      <path d="M10.500 15a17 17 0 0 1 33 0q-15 6-33 0z" fill="#fff" opacity="0.200" />
      <path d="M20 9.500q4-2 7 .5l-1.500 8q-4-2-7.500 0z" fill="#e85d26" />
      <path d="M28.300 10.500q5 2 10.500-.3l-2 9q-5 2-10-.5z" fill="#8bc53f" />
      <path d="M17.500 19.500q4-2 7.700 0l-1.500 8q-4-2.500-7.500-.7z" fill="#40a9e8" />
      <path d="M26.500 20.200q5 2 10 .3l-2 8.500q-5 2-9.500-.5z" fill="#fdc92f" />
    </svg>
  )
}

function MonitorIcon() {
  return (
    <svg width="32" height="25" viewBox="0 0 32 25">
      <defs><linearGradient id="mon" x2="1" y2="1"><stop stopColor="#0e45a8" /><stop offset="1" stopColor="#62a0f0" /></linearGradient></defs>
      <rect x="0.500" y="0.500" width="31" height="23" fill="#b5c4cf" stroke="#90a5b0" />
      <rect x="2" y="2" width="28" height="18" fill="url(#mon)" />
      <path d="M2 9q13 7 28-5v16H2z" fill="#4f8ce8" opacity="0.500" />
      <rect x="2" y="20" width="28" height="2" fill="#dce5e8" />
      <circle cx="5" cy="21" r="2.500" fill="#228ac8" />
      <path d="M5 19l2 2-2 1z" fill="#ffd43b" />
    </svg>
  )
}

function TerminalIcon() {
  return (
    <svg width="32" height="32" viewBox="0 0 32 32">
      <rect x="2" y="2" width="18" height="15" fill="#e8f1fb" stroke="#4d8fd8" />
      <rect x="2" y="2" width="18" height="3" fill="#7fb5ec" />
      <path d="M4 8h4m-2 0v6" stroke="#24519f" fill="none" />
      <rect x="9" y="6" width="19" height="17" fill="#fff" stroke="#3478c8" />
      <rect x="9" y="6" width="19" height="3" fill="#3c87dc" />
      <path d="M14 13v6m3-7v6m3-6v6m3-8v6" stroke="#24519f" fill="none" />
      <path d="M20 17h11v11H16v-5h4z" fill="#f4f9ff" stroke="#3478c8" />
      <path d="M22 24l3-3 3 2" stroke="#3c87dc" fill="none" />
      <path d="M1 29q0-8 8-8t8 8q-8 4-16 0z" fill="#5eaa3e" />
      <path d="M7 21l2 5 3-5z" fill="#fff" />
      <circle cx="9" cy="16" r="5.500" fill="#f1b87b" />
      <path d="M3.500 15q0-6 6-6t5 7q-5-2-5-4-1 3-6 3z" fill="#c0702a" />
    </svg>
  )
}

function BrowserIcon() {
  return (
    <svg width="32" height="32" viewBox="0 0 32 32">
      <circle cx="16" cy="16" r="15" fill="#ff8412" />
      <path d="M16 1a15 15 0 0 1 7 28q-6-4-5-10 5 3 8-2L21 7z" fill="#e65c05" opacity="0.600" />
      <path d="M7 20q-1-6 6-9-3-1-4-1 4-3 9-1 4-3 10-2-5 2-5 4 4 2 5 5-2 3-5 2-3-1-5-3-2 3-1 8-5-1-6-5-1 0-1 3-2-1-3-1z" fill="#f7efe4" />
      <path d="M23 24q5-3 5-9 4 9-5 15-7 2-10-1 7 0 10-5z" fill="#f7efe4" />
    </svg>
  )
}

function WeChatIcon() {
  return (
    <svg width="34" height="30" viewBox="0 0 34 30">
      <path d="M11.500 2C5 2 1 6.500 1 11.500c0 3 1.500 5.500 4 7.300L4 22.500l4-2c10 2.500 15-3 15-9C23 6 18 2 11.500 2z" fill="#3fdc72" />
      <path d="M23 11c-6 0-9.500 4-9.500 8 0 5 5 9 12 7.500l3.500 1.800-.8-3.300C31 23.500 33 21.500 33 19c0-4-4-8-10-8z" fill="#f1f4f3" />
      <g fill="#1f8950"><circle cx="8" cy="8.500" r="1.400" /><circle cx="16" cy="8.500" r="1.400" /></g>
      <g fill="#8c9496"><circle cx="20" cy="17" r="1.200" /><circle cx="27" cy="17" r="1.200" /></g>
    </svg>
  )
}

function NotepadIcon() {
  return (
    <svg width="32" height="30" viewBox="0 0 32 30">
      <defs><linearGradient id="note" x2="0.700" y2="1"><stop stopColor="#e0f7fa" /><stop offset="1" stopColor="#5aafc4" /></linearGradient></defs>
      <path d="M12 3l17 0 2 22-6 4z" fill="#d9d3c0" />
      <path d="M11 3h18l-5 26-23-6z" fill="url(#note)" stroke="#d5eef2" />
      <path d="M24 29l1-8 5 6z" fill="#fff" />
      <path d="M11 2h19" stroke="#9a9a9a" strokeWidth="2.500" strokeDasharray="1 1" />
    </svg>
  )
}

const TinyCaption = styled.text`
  fill: #152225;
  font-family: "Noto Sans CJK SC", sans-serif;
  font-weight: 700;
`

function TeamIcon() {
  return (
    <svg width="32" height="32" viewBox="0 0 32 32">
      <g fill="#7fb5b5" stroke="#3f6c70" strokeWidth="0.800">
        <path d="M8 15q-6-1-4-6-1-4 2-3 4-3 5 1 3 2 0 5zM14 16q-4-3-1-7-1-6 2-5 4-2 5 2 3 5-1 10zM22 15q-4-2-1-6 0-4 3-3 4-2 3 2 4 5 0 7z" />
      </g>
      <path d="M5 9h3m6-1h4m5 2h3M7 12h3m5 1h3m4 0h4" stroke="#28474a" strokeWidth="0.800" strokeDasharray="1 1" />
      <TinyCaption x="4" y="23.500" fontSize="5" textLength="25">智汇交易员</TinyCaption>
      <TinyCaption x="3" y="29.500" fontSize="3.500" textLength="25">·XIAOMENG·</TinyCaption>
    </svg>
  )
}

const PenGlyph = ({ size = 32 }) => (
  <svg width={size} height={size} viewBox="0 0 32 32">
    <rect width="32" height="32" rx="5" fill="#3c8aff" />
    <path d="M10 15.500L18 7.700q1.500-1.200 2.800 0l3.500 3.800q1.200 1.500 0 2.900L16 22.500l-6.500 1q-1 0-.9-1.200z" fill="#fff" />
  </svg>
)

function PaletteIcon() {
  return (
    <svg width="32" height="32" viewBox="0 0 32 32">
      <path d="M0 0h16v16H0z" fill="#61abf1" />
      <path d="M16 0h16v16H16z" fill="#96d3a0" />
      <path d="M0 16h16v16H0z" fill="#ffcf9f" />
      <path d="M16 16h16v16H16z" fill="#c3c6c7" />
      <circle cx="16" cy="16" r="13" fill="#fff" opacity="0.380" />
      <path d="M1 0l4 0 12 14-3 2L0 4z" fill="#c74a66" />
      <circle cx="16.500" cy="16.500" r="4" fill="#f4201b" />
    </svg>
  )
}

const PsIcon = styled.div`
  width: 28px;
  height: 26px;
  margin-top: -6px;
  background: linear-gradient(#2f6fd0, #123a80);
  box-shadow: 0 1px 2px #10394a;
  color: #e4f1ff;
  font: 600 13px/24px "Open Sans", sans-serif;
  text-align: center;
`

function SogouMark({ size }) {
  return (
    <svg width={size} height={size} viewBox="0 0 32 32">
      <defs><linearGradient id="sogou" y2="1"><stop stopColor="#ff7136" /><stop offset="1" stopColor="#ea4310" /></linearGradient></defs>
      <path d="M4 4.500L24 1q3-.4 3.600 2.500L31 20q.8 3-2 5L10 31q-3.500.8-4.500-2.500L1 8.500q-.6-3 3-4z" fill="url(#sogou)" />
      <path d="M25.500 8.500Q15 5 9 8.500q-4 3 0 5.200 3 1.500 8 2.100 8 1 6.500 4.200-2 4-15.500 2" fill="none" stroke="#fff" strokeWidth="4.400" />
    </svg>
  )
}

function SystemTray() {
  return (
    <Tray>
      <TrayIcon $narrow viewBox="-3 -4 22 24"><SogouMark size={16} /></TrayIcon>
      <TrayIcon $narrow viewBox="0 0 22 24">
        <circle cx="11" cy="12" r="7.500" fill="#0a1fa8" stroke="#cfd5df" strokeWidth="1.500" />
        <text x="11" y="16" fill="#fff" fontSize="11" fontWeight="700" textAnchor="middle">?</text>
      </TrayIcon>
      <TrayIcon $narrow viewBox="0 0 22 24" shapeRendering="crispEdges">
        <path d="M10.500 3.500h5v3h-5zM7.500 5.500h5v3h-5z" fill="#35717f" stroke="#fff" />
        <path d="M8 16h6l-3 3z" fill="#fff" />
      </TrayIcon>
      <TrayIcon $low viewBox="-4 -4 24 24"><PenGlyph size={16} /></TrayIcon>
      <TrayIcon $low viewBox="0 0 24 24">
        <path d="M12 4q4 1.500 8 2 0 9-8 15Q4 15 4 6q4-.5 8-2z" fill="#fff" />
        <path d="M12 5.500q3 1.500 6.700 1.700Q18 14 12 19 6 14 5.300 7.200 9 7 12 5.500z" fill="#2675e8" />
        <path d="M7 9l5 4 5-4v3l-5 4-5-4z" fill="#fff" />
      </TrayIcon>
      <TrayIcon $low viewBox="0 0 24 24">
        <rect x="4.500" y="4.500" width="15" height="15" rx="2" fill="#1d75ba" stroke="#9bd6f4" />
        <path d="M7 7h5v6H7zM7 10h5M14 7l4 5m0-5l-4 5M9 15h9v3H9z" stroke="#fff" fill="none" />
        <path d="M4 16l4 4H4z" fill="#f6ca42" />
      </TrayIcon>
      <TrayIcon $low viewBox="0 0 24 24">
        <path d="M4 9.500h4l5.500-5.500v16l-5.500-5.500H4z" fill="#d9663f" stroke="#f3c3b0" />
        <path d="M16 8q3 4 0 8M18.500 6q4 6 0 12" stroke="#8b443a" fill="none" />
      </TrayIcon>
      <TrayIcon $low viewBox="0 0 24 24">
        <path d="M7 4h7v5H7zM5 9h11v7q-5 5-11 0z" fill="#a8adb0" stroke="#666" />
        <path d="M9 5v2m3-2v2" stroke="#333" />
        <circle cx="16" cy="16" r="5" fill="#2fa62f" />
        <path d="M13 16l2 2.500 4-5" stroke="#fff" strokeWidth="1.500" fill="none" />
      </TrayIcon>
      <TrayIcon $low viewBox="0 0 24 24">
        <path d="M5 9.500h3l4.500-4.500v15l-4.500-4.500H5z" fill="#f3f3f3" stroke="#777" />
        <circle cx="16" cy="16" r="4.500" fill="#fff" stroke="#e12a22" strokeWidth="2" />
        <path d="M13 13l6 6" stroke="#e12a22" strokeWidth="2" />
      </TrayIcon>
      <TrayIcon $low viewBox="0 0 24 24" shapeRendering="crispEdges">
        {[0, 1, 2, 3, 4].map((i) => <rect key={i} x={4 + i * 3} y={15 - i * 2} width="2" height={3 + i * 2} fill="#fff" />)}
      </TrayIcon>
      <Clock>5:55<br />2022/1/3</Clock>
      <ShowDesktop />
    </Tray>
  )
}

function Taskbar() {
  return (
    <TaskbarRoot>
      <StartButton><StartOrb /></StartButton>
      <Task $width={69}><MonitorIcon /></Task>
      <Task $width={54}><TerminalIcon /></Task>
      <Task $width={70}><BrowserIcon /></Task>
      <Task $width={54}><WeChatIcon /></Task>
      <Task $width={69}><NotepadIcon /></Task>
      <Task $width={58} $open $focused><TeamIcon /></Task>
      <Task $width={4} />
      <Task $width={58} $open><PenGlyph /></Task>
      <Task $width={66}><PaletteIcon /></Task>
      <Task $width={58}><PsIcon>Ps</PsIcon></Task>
      <SystemTray />
    </TaskbarRoot>
  )
}

/* ---------- overlays ---------- */

const ImeBar = styled.div`
  position: absolute;
  left: 1405px;
  top: 155px;
  display: flex;
  align-items: center;
`

const ImeMark = styled.div`
  z-index: 1;
  width: 33px;
  height: 32px;
`

const ImeKeys = styled.div`
  display: flex;
  align-items: center;
  width: 177px;
  height: 26px;
  margin: 1px 0 0 -8px;
  padding-left: 7px;
  border: 1px solid #b9cce4;
  border-radius: 2px;
  background: #fff;
  color: #0a6fdb;
  font: 700 15px/24px "Noto Sans CJK SC", sans-serif;
`

const ImeKey = styled.span`
  display: flex;
  align-items: center;
  justify-content: center;
  flex: none;
  width: 24px;
  height: 24px;
  font-weight: ${({ $light }) => ($light ? 500 : 700)};
`

const CutIcon = styled(Scissors)`
  transform: rotate(-90deg);
`

const Pointer = styled.svg`
  position: absolute;
  left: ${({ $x }) => $x}px;
  top: ${({ $y }) => $y}px;
  width: 13px;
  height: 20px;
`

function InputMethod() {
  return (
    <ImeBar>
      <ImeMark><SogouMark size={32} /></ImeMark>
      <ImeKeys>
        <ImeKey>中</ImeKey>
        <ImeKey>
          <svg width="16" height="16">
            <circle cx="4.500" cy="5" r="1.800" fill="none" stroke="currentColor" strokeWidth="1.500" />
            <path d="M10 9h3.500v3l-2 2.500H10l1-3h-1z" fill="currentColor" />
          </svg>
        </ImeKey>
        <ImeKey>
          <svg width="16" height="14" fill="none" stroke="currentColor">
            <rect x="1" y="1.500" width="13" height="10.500" strokeWidth="1.700" />
            <path d="M3.500 4.500h9M3.500 7h9" strokeWidth="1.500" strokeDasharray="2 1" />
            <path d="M5 9.500h5.500" strokeWidth="1.200" />
          </svg>
        </ImeKey>
        <ImeKey>
          <svg width="16" height="17" fill="currentColor">
            <circle cx="7.500" cy="5" r="4" />
            <path d="M1 16q0-6 5-6h3q5 1 5 6z" />
            <rect x="8.500" y="9.500" width="5" height="5" fill="#fff" stroke="currentColor" />
          </svg>
        </ImeKey>
        <ImeKey><CutIcon size={16} strokeWidth={2.6} /></ImeKey>
        <ImeKey $light>简</ImeKey>
        <ImeKey><Search size={16} strokeWidth={2.6} /></ImeKey>
      </ImeKeys>
    </ImeBar>
  )
}

function MousePointer({ x, y }) {
  return (
    <Pointer $x={x} $y={y} viewBox="0 0 13 20">
      <path d="M.5.500v16l3.700-3.300 2.500 5.500 2.600-1.200-2.500-5.300h5.200z" fill="#fff" stroke="#000" />
    </Pointer>
  )
}

function App() {
  return (
    <Screen>
      <GlobalStyle />
      <Workspace>
        <ChartWindow chart={charts.m30} top />
        <ChartWindow chart={charts.h1} top />
        <ChartWindow chart={charts.h4} active />
        <ChartWindow chart={charts.daily} />
      </Workspace>
      <Tabs />
      <Status />
      <Taskbar />
      <InputMethod />
      <MousePointer x={0} y={0} />
      <MousePointer x={524} y={982} />
    </Screen>
  )
}

export default App
